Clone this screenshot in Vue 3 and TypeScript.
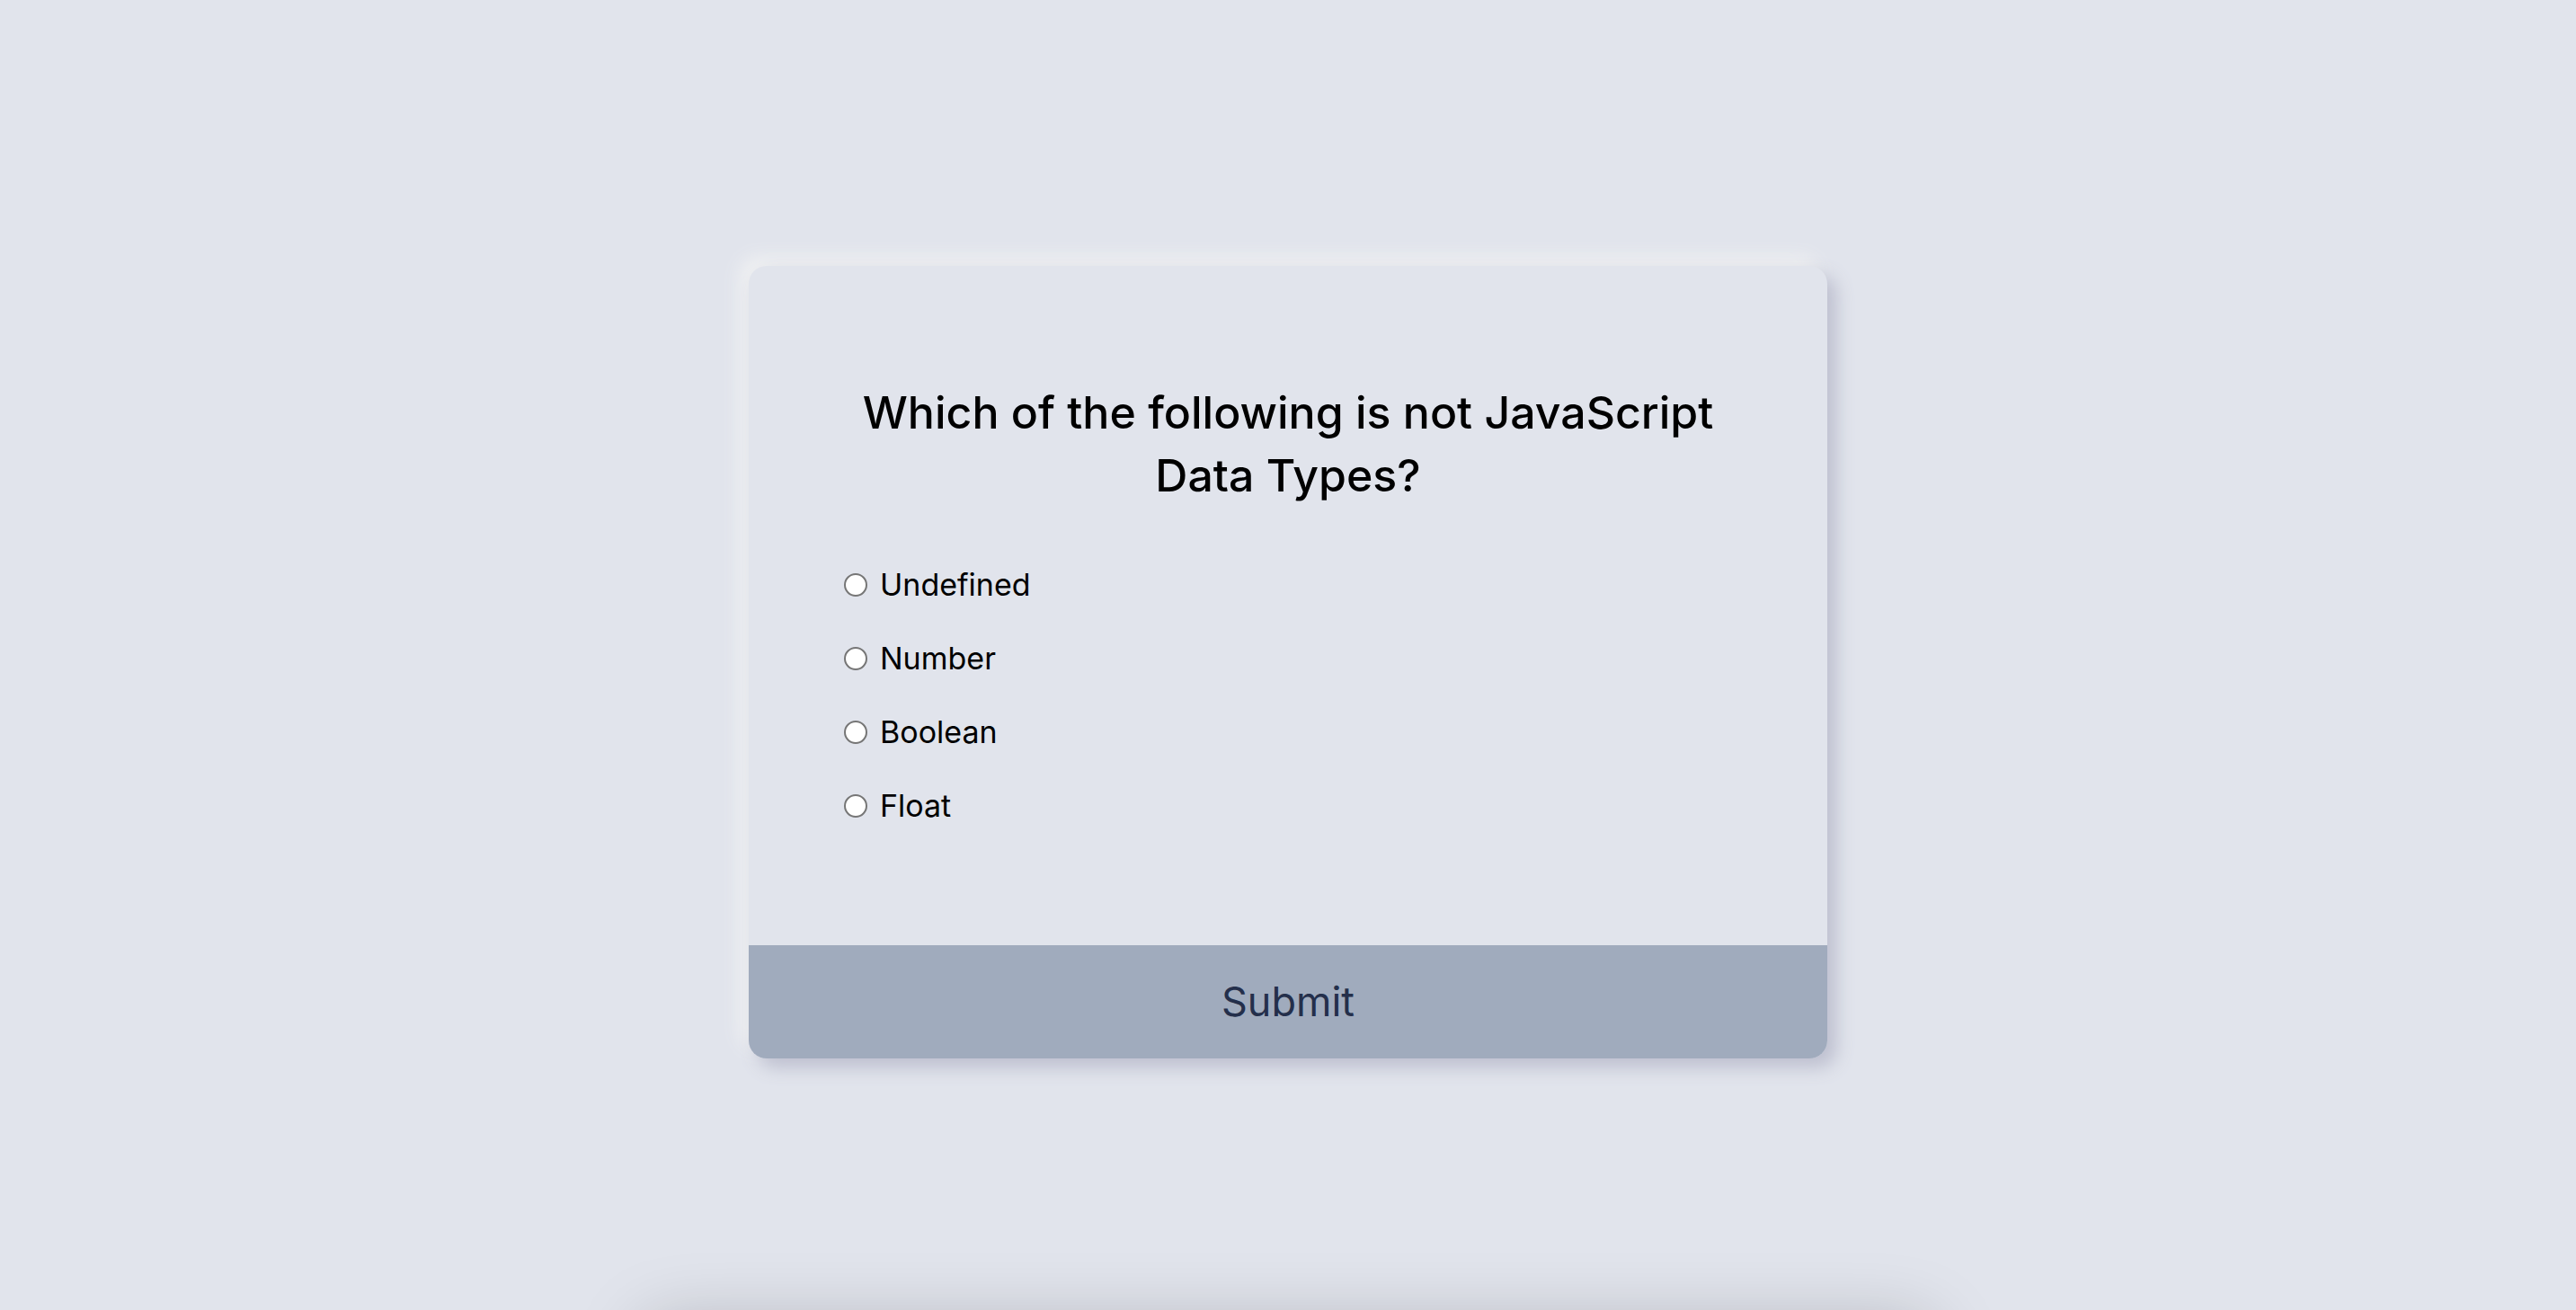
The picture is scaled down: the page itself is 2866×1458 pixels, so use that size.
<script setup lang="ts">
import { ref } from 'vue'

interface Answer {
  id: string
  label: string
}

const question = 'Which of the following is not JavaScript Data Types?'
const answers: Answer[] = [
  { id: 'a', label: 'Undefined' },
  { id: 'b', label: 'Number' },
  { id: 'c', label: 'Boolean' },
  { id: 'd', label: 'Float' },
]
const selected = ref('')
</script>

<template>
  <main class="page">
    <form class="quiz" @submit.prevent>
      <div class="quiz-body">
        <h2 id="question">{{ question }}</h2>
        <ul role="radiogroup" aria-labelledby="question">
          <li v-for="answer in answers" :key="answer.id">
            <input :id="answer.id" v-model="selected" type="radio" name="answer" :value="answer.id" />
            <label :for="answer.id">{{ answer.label }}</label>
          </li>
        </ul>
      </div>
      <button type="submit">Submit</button>
    </form>
  </main>
</template>

<style>
body {
  margin: 0;
  background: #e1e4ec;
}
</style>

<style scoped>
.page {
  position: relative;
  box-sizing: border-box;
  min-height: 100vh;
  padding: 32px 16px 16px;
  display: flex;
  align-items: center;
  justify-content: center;
  overflow: hidden;
  background: #e1e4ec;
  color: #000;
  font-family: Inter, "Liberation Sans", sans-serif;
}

/* soft shade rising from the bottom edge */
.page::after {
  content: "";
  position: absolute;
  top: 100%;
  left: 25%;
  right: 25%;
  height: 80px;
  margin-top: 16px;
  border-radius: 20px;
  box-shadow: 0 0 80px rgba(0, 0, 0, 0.22);
  pointer-events: none;
}

.quiz {
  width: 100%;
  max-width: 1200px;
  overflow: hidden;
  border-radius: 20px;
  background: #e1e4ec;
  box-shadow: 10px 10px 20px #bdbfcf, -10px -10px 20px #f0f1f2;
}

.quiz-body {
  padding: 128px 104px 112px;
}

h2 {
  margin: 0 0 46px;
  font-size: 50px;
  font-weight: 500;
  line-height: 70px;
  text-align: center;
}

ul {
  margin: 0;
  padding: 0 2px 2px;
  list-style: none;
}

li {
  display: flex;
  align-items: center;
  gap: 14px;
  height: 82px;
}

input {
  appearance: none;
  box-sizing: border-box;
  width: 26px;
  height: 26px;
  margin: 0;
  border: 2px solid #767676;
  border-radius: 50%;
  background: #fff;
}

input:checked {
  border-color: #0075ff;
  background: radial-gradient(#0075ff 50%, #fff 56%);
}

label {
  font-size: 34px;
  line-height: 48px;
}

button {
  display: block;
  width: 100%;
  padding: 33px;
  border: 0;
  background: #a0abbd;
  color: #242f4b;
  font-family: inherit;
  font-size: 45px;
  line-height: 60px;
  cursor: pointer;
}
</style>
